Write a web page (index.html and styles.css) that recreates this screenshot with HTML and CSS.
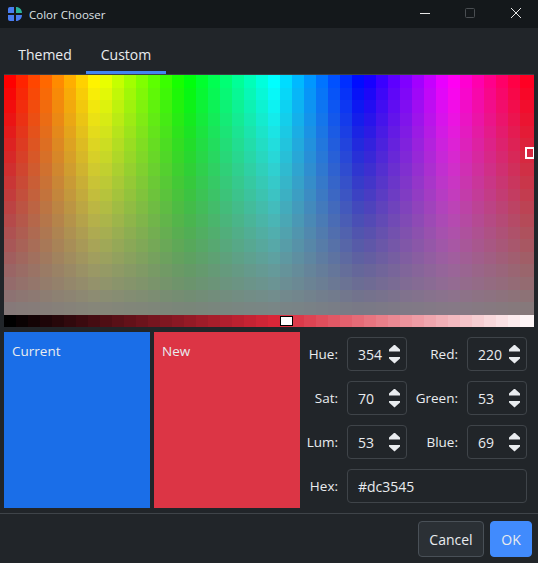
FILE: index.html
```html
<!DOCTYPE html>
<html lang="en">
<head>
<meta charset="utf-8">
<title>Color Chooser</title>
<link rel="stylesheet" href="styles.css">
</head>
<body>
<div class="window">
  <header class="titlebar">
    <svg class="app-icon" width="14" height="14" viewBox="0 0 14 14">
      <path fill="#4a7df0" d="M0 2a2 2 0 0 1 2-2h4v6H0z"/>
      <path fill="#2ab39b" d="M8 0c3.400 0 6 2.600 6 6H8z"/>
      <path fill="#4a7df0" d="M0 8h6v6H2a2 2 0 0 1-2-2z"/>
      <path fill="#4a7df0" d="M8 8h6c0 3.400-2.600 6-6 6z"/>
    </svg>
    <span class="title">Color Chooser</span>
    <div class="win-controls">
      <svg class="win-btn" width="10" height="10" viewBox="0 0 10 10"><path d="M0 5.500h10" stroke="#e6e6e6" fill="none"/></svg>
      <svg class="win-btn" width="10" height="10" viewBox="0 0 10 10"><rect x=".5" y=".5" width="9" height="9" rx="1" stroke="#4a4e52" fill="none"/></svg>
      <svg class="win-btn win-close" width="10" height="10" viewBox="0 0 10 10"><path d="M0 0l10 10M10 0L0 10" stroke="#e6e6e6" fill="none"/></svg>
    </div>
  </header>
  <nav class="tabs">
    <div class="tab">Themed</div>
    <div class="tab tab-active">Custom</div>
  </nav>
  <main class="pane">
    <div class="spectrum">
      <canvas id="spectrum" class="canvas" width="530" height="240"></canvas>
      <div class="picker"></div>
    </div>
    <div class="lumbar">
      <canvas id="lum" class="canvas" width="530" height="12"></canvas>
      <div class="lum-marker"></div>
    </div>
    <div class="bottom">
      <div class="swatch swatch-current">Current</div>
      <div class="swatch swatch-new">New</div>
      <div class="fields">
        <label class="lbl">Hue:</label><div class="spin"><span>354</span><div class="arrows"><i class="up"></i><i class="down"></i></div></div>
        <label class="lbl">Red:</label><div class="spin"><span>220</span><div class="arrows"><i class="up"></i><i class="down"></i></div></div>
        <label class="lbl">Sat:</label><div class="spin"><span>70</span><div class="arrows"><i class="up"></i><i class="down"></i></div></div>
        <label class="lbl">Green:</label><div class="spin"><span>53</span><div class="arrows"><i class="up"></i><i class="down"></i></div></div>
        <label class="lbl">Lum:</label><div class="spin"><span>53</span><div class="arrows"><i class="up"></i><i class="down"></i></div></div>
        <label class="lbl">Blue:</label><div class="spin"><span>69</span><div class="arrows"><i class="up"></i><i class="down"></i></div></div>
        <label class="lbl">Hex:</label><div class="spin hex"><span>#dc3545</span></div>
      </div>
    </div>
  </main>
  <footer class="footer">
    <button class="btn">Cancel</button>
    <button class="btn btn-ok">OK</button>
  </footer>
</div>
<script src="app.js"></script>
</body>
</html>
```
FILE: styles.css
```css
* { box-sizing: border-box; }
html, body { margin: 0; height: 100%; }
body { background: #212529; color: #e9ecef; font: 14px "Open Sans", "Noto Sans", sans-serif; overflow: hidden; }
.window { width: 538px; height: 563px; display: flex; flex-direction: column; }
.titlebar { height: 28px; background: #14181b; display: flex; align-items: center; padding-left: 8px; flex: none; }
.app-icon { margin-right: 7px; }
.title { font-size: 11.5px; color: #dee2e6; }
.win-controls { margin-left: auto; display: flex; gap: 35px; padding-right: 17px; padding-bottom: 2px; }
.win-btn { display: block; }
.win-close { margin-left: 1px; }
.tabs { height: 46px; display: flex; padding-left: 6px; flex: none; }
.tab { width: 80px; height: 46px; display: flex; align-items: center; justify-content: center; padding-top: 7px; padding-right: 2px; }
.tab-active { border-bottom: 3px solid #4286f0; padding-top: 10px; padding-right: 0; }
.pane { border-top: 1px solid #3a3f44; margin: 0 4px; flex: none; }
.spectrum { position: relative; width: 530px; height: 240px; overflow: hidden; }
.canvas { display: block; }
.picker { position: absolute; left: 521px; top: 72px; width: 9px; height: 12px; border: 2px solid #fff; border-right-width: 1px; }
.lumbar { position: relative; width: 530px; height: 12px; }
.lum-marker { position: absolute; left: 276px; top: 1px; width: 13px; height: 10px; background: #fff; border: 1px solid #000; }
.bottom { display: flex; margin-top: 5px; gap: 4px; height: 176px; }
.swatch { width: 146px; padding: 10px 8px; font-size: 13.5px; }
.swatch-current { background: #1a6ee8; }
.swatch-new { background: #dc3545; }
.fields { display: grid; grid-template-columns: 43px 60px 60px 60px; grid-template-rows: repeat(4, 34px); row-gap: 10px; margin-top: 5px; column-gap: 0; }
.lbl { display: flex; align-items: center; justify-content: flex-end; padding-right: 9px; font-size: 13.5px; white-space: nowrap; }
.spin { border: 1px solid #3f4449; border-radius: 4px; display: flex; align-items: center; justify-content: space-between; padding: 0 6px 0 10px; }
.hex { grid-column: 2 / 5; }
.arrows { display: flex; flex-direction: column; gap: 5px; }
.arrows i { display: block; width: 11px; height: 7px; }
.up { background: #e9ecef; clip-path: polygon(50% 0, 100% 70%, 100% 100%, 0 100%, 0 70%); }
.down { background: #e9ecef; clip-path: polygon(0 0, 100% 0, 100% 30%, 50% 100%, 0 30%); }
.footer { border-top: 1px solid #3f4449; margin-top: 5px; flex: 1; display: flex; justify-content: flex-end; align-items: flex-start; gap: 6px; padding: 7px 6px 0 0; }
.btn { height: 36px; font: inherit; color: #e9ecef; background: #2b3035; border: 1px solid #495057; border-radius: 4px; width: 66px; padding: 0; }
.btn-ok { width: 42px; background: #418bfd; border-color: #418bfd; }
```
FILE: app.js
```js
function hls(h, l, s) {
  var c = (1 - Math.abs(2 * l - 1)) * s, hp = h / 60;
  var x = c * (1 - Math.abs(hp % 2 - 1)), m = l - c / 2;
  var t = [[c,x,0],[x,c,0],[0,c,x],[0,x,c],[x,0,c],[c,0,x]][Math.floor(hp) % 6];
  return "rgb(" + t.map(function (v) { return Math.round((v + m) * 255); }).join(",") + ")";
}
var sp = document.getElementById("spectrum").getContext("2d");
var rowH = 240 / 19;
for (var col = 0; col < 44; col++) {
  for (var row = 0; row < 19; row++) {
    sp.fillStyle = hls(col * 360 / 44, 0.5, 1 - row / 19);
    var y0 = Math.round(row * rowH), y1 = Math.round((row + 1) * rowH);
    sp.fillRect(col * 12, y0, col === 43 ? 14 : 12, y1 - y0);
  }
}
var lum = document.getElementById("lum").getContext("2d");
for (var i = 0; i < 44; i++) {
  lum.fillStyle = hls(354, i / 44, 0.7);
  lum.fillRect(i * 12, 0, i === 43 ? 14 : 12, 12);
}
```
